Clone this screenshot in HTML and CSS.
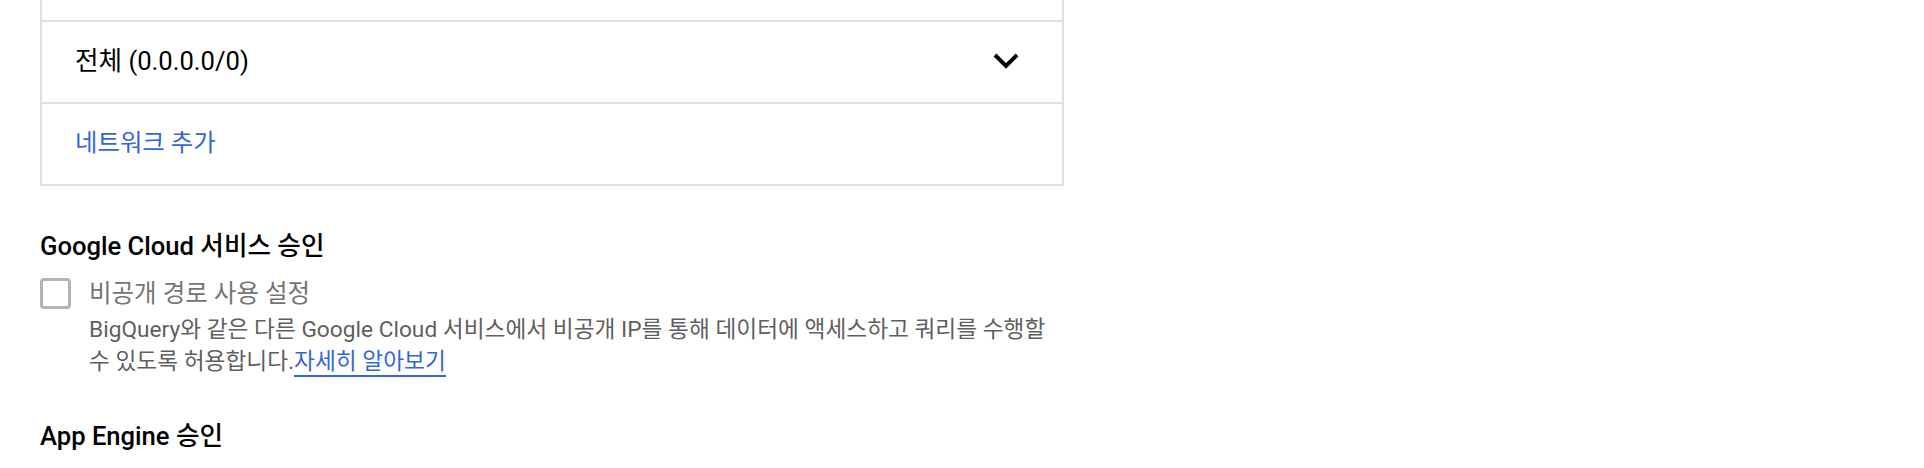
FILE: index.html
```html
<!DOCTYPE html>
<html lang="ko">
<head>
<meta charset="utf-8">
<link rel="stylesheet" href="styles.css">
</head>
<body>
<div class="page">
  <div class="netbox">
    <div class="row row-top"></div>
    <div class="row row-select">
      <span class="select-text">전체 (0.0.0.0/0)</span>
      <svg class="chevron" width="30" height="20" viewBox="0 0 30 20"><path d="M4 4 L15 15 L26 4" fill="none" stroke="#000" stroke-width="4"/></svg>
    </div>
    <div class="row row-add">
      <a class="link row-link">네트워크 추가</a>
    </div>
  </div>

  <h3 class="heading heading-first">Google Cloud 서비스 승인</h3>
  <div class="check">
    <span class="box"></span>
    <div class="check-body">
      <div class="check-label">비공개 경로 사용 설정</div>
      <div class="check-desc">BigQuery와 같은 다른 Google Cloud 서비스에서 비공개 IP를 통해 데이터에 액세스하고 쿼리를 수행할 수 있도록 허용합니다.<a class="link underline">자세히 알아보기</a></div>
    </div>
  </div>

  <h3 class="heading heading-second">App Engine 승인</h3>
</div>
</body>
</html>
```

FILE: styles.css
```css
html, body {
  margin: 0;
  padding: 0;
  background: #fff;
}
body {
  font-family: Roboto, "Noto Sans CJK KR", sans-serif;
  color: #000;
  overflow: hidden;
}
.page {
  padding-left: 40px;
  width: 1024px;
}
.netbox {
  width: 1024px;
  box-sizing: border-box;
  border: 2px solid #e0e0e0;
  border-top: none;
}
.row {
  display: flex;
  align-items: center;
  padding: 0 41px 0 33px;
  height: 80px;
  border-top: 2px solid #e0e0e0;
}
.row-top {
  height: 20px;
  border-top: none;
}
.row-select {
  justify-content: space-between;
}
.select-text {
  font-size: 25.6px;
  line-height: 32px;
  color: #000;
  margin-top: -3px;
}
.chevron {
  display: block;
  margin-top: -2px;
}
.link {
  color: #3367d6;
  text-decoration: none;
}
.row-link {
  font-size: 24.4px;
  line-height: 32px;
  margin-top: -2px;
}
.heading {
  margin: 0;
  font-size: 25.6px;
  font-weight: 500;
  line-height: 32px;
  color: #000;
}
.heading-first {
  margin-top: 44px;
}
.heading-second {
  margin-top: 42px;
}
.check {
  display: flex;
  gap: 18px;
  margin-top: 16px;
}
.box {
  flex: none;
  width: 31px;
  height: 31px;
  box-sizing: border-box;
  border: 3px solid #b3b3b3;
  border-radius: 4px;
}
.check-label {
  font-size: 24.5px;
  line-height: 32px;
  color: #757575;
}
.check-desc {
  margin-top: 4px;
  font-size: 22.7px;
  line-height: 32px;
  color: #5f5f5f;
  width: 975px;
}
.underline {
  border-bottom: 2px solid #3367d6;
}
```
